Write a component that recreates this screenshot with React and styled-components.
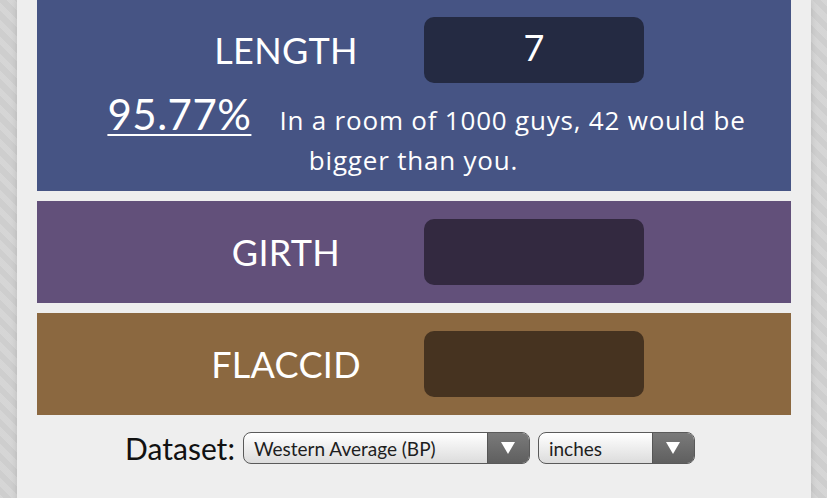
import React from "react";
import styled, { createGlobalStyle } from "styled-components";

const GlobalStyle = createGlobalStyle`
  html, body {
    margin: 0;
    padding: 0;
    background: #d2d2d2;
    overflow: hidden;
  }
  body {
    font-family: "Lato", "Noto Sans", sans-serif;
    background-image: repeating-linear-gradient(
      45deg,
      rgba(255, 255, 255, 0.08) 0 6px,
      rgba(0, 0, 0, 0.02) 6px 12px
    );
  }
`;

const Page = styled.div`
  width: 794px;
  min-height: 520px;
  margin: 0 auto;
  background: #eeeeee;
  box-shadow: 0 0 6px rgba(0, 0, 0, 0.12);
  padding: 0 20px;
  box-sizing: border-box;
  display: flex;
  flex-direction: column;
  gap: 10px;
`;

const Band = styled.section`
  background: ${(p) => p.$bg};
  padding: ${(p) => (p.$tall ? "17px 0 11px" : "18px 0")};
  display: flex;
  flex-direction: column;
  color: #ffffff;
`;

const Row = styled.div`
  display: flex;
  align-items: center;
  justify-content: center;
  gap: 28px;
  padding-right: 7px;
`;

const Label = styled.div`
  width: 220px;
  text-align: center;
  font-size: 36px;
  letter-spacing: 0.3px;
  line-height: 1;
`;

const Field = styled.input`
  width: 220px;
  height: 66px;
  box-sizing: border-box;
  border: none;
  border-radius: 10px;
  background: ${(p) => p.$bg};
  color: #ffffff;
  font-family: inherit;
  font-size: 36px;
  text-align: center;
  outline: none;
  padding: 0 0 6px;
`;

const Result = styled.p`
  margin: 17px 0 0;
  height: 80px;
  text-align: center;
  font-family: "Open Sans", "Lato", sans-serif;
  font-size: 26px;
  letter-spacing: 0.8px;
  line-height: 40px;
  padding: 0 20px;
`;

const Percent = styled.a`
  font-family: "Lato", sans-serif;
  font-size: 42px;
  line-height: 0;
  letter-spacing: 0.5px;
  color: #ffffff;
  text-decoration: underline;
  text-decoration-thickness: 2px;
  text-underline-offset: 4px;
  margin: 0 28px 0 26px;
`;

const Controls = styled.div`
  display: flex;
  align-items: center;
  justify-content: center;
  gap: 8px;
  padding: 7px 7px 0 0;
`;

const ControlLabel = styled.span`
  font-size: 30px;
  line-height: 32px;
  color: #111111;
`;

const Picker = styled.label`
  display: flex;
  align-items: stretch;
  width: ${(p) => p.$w}px;
  height: 32px;
  box-sizing: border-box;
  border: 1.5px solid #5a5a5a;
  border-radius: 8px;
  overflow: hidden;
  background: linear-gradient(#ffffff, #dcdcdc);
`;

const PickerSelect = styled.select`
  flex: 1;
  min-width: 0;
  appearance: none;
  -webkit-appearance: none;
  border: none;
  background: transparent;
  font-family: inherit;
  font-size: 19px;
  color: #1e1e1e;
  padding: 0 0 0 10px;
  outline: none;
`;

const PickerArrow = styled.span`
  width: 41px;
  display: flex;
  align-items: center;
  justify-content: center;
  background: linear-gradient(#7a7a7a, #5f5f5f);
  border-left: 1px solid #555555;
`;

const Triangle = () => (
  <svg width="14" height="12" viewBox="0 0 14 12">
    <polygon points="0,0 14,0 7,12" fill="#ffffff" />
  </svg>
);

const measures = [
  {
    name: "LENGTH",
    bg: "#465484",
    field: "#242a42",
    value: "7",
    result: {
      percent: "95.77%",
      text: "In a room of 1000 guys, 42 would be bigger than you.",
    },
  },
  { name: "GIRTH", bg: "#62507a", field: "#332940", value: "" },
  { name: "FLACCID", bg: "#8b6840", field: "#463320", value: "" },
];

export default function App() {
  return (
    <>
      <GlobalStyle />
      <Page>
        {measures.map((m) => (
          <Band key={m.name} $bg={m.bg} $tall={!!m.result}>
            <Row>
              <Label>{m.name}</Label>
              <Field $bg={m.field} defaultValue={m.value} inputMode="decimal" />
            </Row>
            {m.result && (
              <Result>
                <Percent href="#">{m.result.percent}</Percent>
                {m.result.text}
              </Result>
            )}
          </Band>
        ))}
        <Controls>
          <ControlLabel>Dataset:</ControlLabel>
          <Picker $w={287}>
            <PickerSelect defaultValue="bp">
              <option value="bp">Western Average (BP)</option>
              <option value="nbp">Western Average (NBP)</option>
            </PickerSelect>
            <PickerArrow>
              <Triangle />
            </PickerArrow>
          </Picker>
          <Picker $w={157}>
            <PickerSelect defaultValue="in">
              <option value="in">inches</option>
              <option value="cm">centimeters</option>
            </PickerSelect>
            <PickerArrow>
              <Triangle />
            </PickerArrow>
          </Picker>
        </Controls>
      </Page>
    </>
  );
}
